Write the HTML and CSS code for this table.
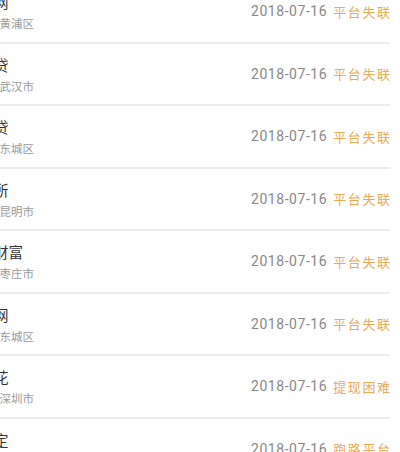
FILE: index.html
```html
<!DOCTYPE html>
<html lang="zh">
<head>
<meta charset="utf-8">
<link rel="stylesheet" href="styles.css">
</head>
<body>
<ul class="list">
  <li class="row"><div class="info"><div class="name">理财网</div><div class="city">上海市黄浦区</div></div><div class="meta"><span class="date">2018-07-16</span><span class="status">平台失联</span></div></li>
  <li class="row"><div class="info"><div class="name">融金贷</div><div class="city">湖北省武汉市</div></div><div class="meta"><span class="date">2018-07-16</span><span class="status">平台失联</span></div></li>
  <li class="row"><div class="info"><div class="name">钱满贷</div><div class="city">北京市东城区</div></div><div class="meta"><span class="date">2018-07-16</span><span class="status">平台失联</span></div></li>
  <li class="row"><div class="info"><div class="name">交易所</div><div class="city">云南省昆明市</div></div><div class="meta"><span class="date">2018-07-16</span><span class="status">平台失联</span></div></li>
  <li class="row"><div class="info"><div class="name">汇融财富</div><div class="city">山东省枣庄市</div></div><div class="meta"><span class="date">2018-07-16</span><span class="status">平台失联</span></div></li>
  <li class="row"><div class="info"><div class="name">金信网</div><div class="city">北京市东城区</div></div><div class="meta"><span class="date">2018-07-16</span><span class="status">平台失联</span></div></li>
  <li class="row"><div class="info"><div class="name">有钱花</div><div class="city">广东省深圳市</div></div><div class="meta"><span class="date">2018-07-16</span><span class="status">提现困难</span></div></li>
  <li class="row"><div class="info"><div class="name">安稳定</div><div class="city">浙江省杭州市</div></div><div class="meta"><span class="date">2018-07-16</span><span class="status">跑路平台</span></div></li>
</ul>
</body>
</html>
```

FILE: styles.css
```css
html, body {
  margin: 0;
  padding: 0;
  background: #ffffff;
  overflow: hidden;
}

body {
  width: 400px;
  height: 452px;
  font-family: "Noto Sans CJK SC", "Noto Sans", sans-serif;
}

.list {
  list-style: none;
  margin: -19px 10px 0 -35px;
  padding: 0;
}

.row {
  display: flex;
  align-items: center;
  justify-content: space-between;
  height: 60.5px;
  border-bottom: 2px solid #ececec;
}

.info {
  display: flex;
  flex-direction: column;
  align-self: flex-start;
  padding-top: 11px;
  gap: 3px;
}

.name {
  font-size: 14.5px;
  line-height: 20px;
  color: #333333;
  white-space: nowrap;
}

.city {
  font-size: 11.5px;
  line-height: 16px;
  color: #9a9a9a;
  white-space: nowrap;
}

.meta {
  display: flex;
  align-items: center;
  gap: 6px;
  white-space: nowrap;
}

.date {
  font-family: Roboto, "Noto Sans", sans-serif;
  font-size: 14px;
  letter-spacing: 0.55px;
  color: #888888;
}

.status {
  font-size: 13px;
  letter-spacing: 1.6px;
  margin-right: -1.6px;
  color: #e9aa55;
}
```
